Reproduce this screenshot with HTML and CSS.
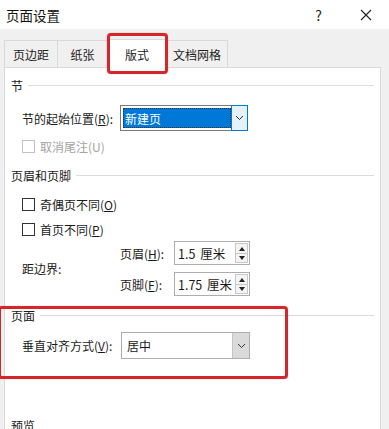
FILE: index.html
```html
<!DOCTYPE html>
<html lang="zh">
<head>
<meta charset="utf-8">
<link rel="stylesheet" href="styles.css">
</head>
<body>
<div class="dialog">
  <div class="titlebar">
    <span class="title">页面设置</span>
    <span class="help">?</span>
    <svg class="close" width="12" height="12" viewBox="0 0 12 12"><path d="M1 1 L11 11 M11 1 L1 11" stroke="#222" stroke-width="1.1" fill="none"/></svg>
  </div>
  <div class="tabs">
    <div class="tab t1">页边距</div>
    <div class="tab t2">纸张</div>
    <div class="tab t3 active">版式</div>
    <div class="tab t4">文档网格</div>
    <div class="hl hl-tab"></div>
  </div>
  <div class="panel">
    <div class="group g1"><span class="gtext">节</span><span class="gline"></span></div>
    <div class="row r-start">
      <span class="label">节的起始位置(<u>R</u>):</span>
      <div class="select focus">
        <span class="sel-text">新建页</span>
        <span class="drop drop-blue"><svg width="9" height="6" viewBox="0 0 9 6"><path d="M1 1 L4.5 4.5 L8 1" stroke="#333" stroke-width="1" fill="none"/></svg></span>
      </div>
    </div>
    <div class="row r-cb0">
      <span class="cb disabled"></span><span class="cbtext disabled-text">取消尾注(U)</span>
    </div>
    <div class="group g2"><span class="gtext">页眉和页脚</span><span class="gline"></span></div>
    <div class="row r-cb1"><span class="cb"></span><span class="cbtext">奇偶页不同(<u>O</u>)</span></div>
    <div class="row r-cb2"><span class="cb"></span><span class="cbtext">首页不同(<u>P</u>)</span></div>
    <div class="margins">
      <span class="mlabel">距边界:</span>
      <div class="spins">
        <div class="spinrow">
          <span class="slabel">页眉(<u>H</u>):</span>
          <div class="spin"><span class="stext">1.5 厘米</span><span class="sbtn"><span class="up"></span><span class="down"></span></span></div>
        </div>
        <div class="spinrow">
          <span class="slabel">页脚(<u>F</u>):</span>
          <div class="spin"><span class="stext">1.75 厘米</span><span class="sbtn"><span class="up"></span><span class="down"></span></span></div>
        </div>
      </div>
    </div>
    <div class="group g3"><span class="gtext">页面</span><span class="gline"></span></div>
    <div class="row r-valign">
      <span class="label">垂直对齐方式(<u>V</u>):</span>
      <div class="select plain">
        <span class="sel-text2">居中</span>
        <span class="drop drop-gray"><svg width="9" height="6" viewBox="0 0 9 6"><path d="M1 1 L4.5 4.5 L8 1" stroke="#333" stroke-width="1" fill="none"/></svg></span>
      </div>
    </div>
    <div class="group g4"><span class="gtext">预览</span></div>
  </div>
  <div class="hl hl-page"></div>
</div>
</body>
</html>
```
FILE: styles.css
```css
* { box-sizing: border-box; }
html, body { margin: 0; padding: 0; }
body {
  width: 389px; height: 429px; overflow: hidden;
  background: #f0f0f0;
  font-family: "Noto Sans CJK SC", "Microsoft YaHei", sans-serif;
  font-size: 12px; color: #1a1a1a;
}
.dialog { position: relative; width: 389px; height: 429px; }
.titlebar {
  height: 29px; background: #fff;
  display: flex; align-items: center;
  padding-left: 6px;
}
.title { font-size: 13.5px; color: #111; }
.help { margin-left: auto; font-size: 14px; margin-right: 38px; color: #222; }
.close { margin-right: 17px; }
.tabs {
  position: relative;
  display: flex; align-items: flex-end;
  height: 38px; padding-left: 4px;
}
.tab {
  height: 27px; display: flex; align-items: center; justify-content: center;
  background: #f0f0f0; border: 1px solid #d9d9d9; border-bottom: none;
  margin-right: -1px; color: #222;
}
.t1 { width: 54px; }
.t2 { width: 51px; }
.t3 { width: 60px; }
.t4 { width: 62px; }
.tab.active { background: #fff; height: 29px; position: relative; z-index: 2; margin-bottom: -1px; }
.hl {
  position: absolute; border: 3px solid #d5262c; border-radius: 4px; z-index: 5;
  box-shadow: 0 0 1px rgba(213,38,44,0.6);
}
.hl-tab { left: 107px; top: 4px; width: 61px; height: 41px; }
.hl-page { left: -2px; top: 306px; width: 290px; height: 73px; }
.panel {
  margin-left: 4px; width: 377px; height: 370px;
  background: #fff; border: 1px solid #d9d9d9;
  padding-left: 6px; padding-right: 6px;
  display: flex; flex-direction: column;
}
.group { display: flex; align-items: center; height: 16px; }
.gtext { color: #1a1a1a; }
.gline { flex: 1; height: 1px; background: #dcdcdc; margin-left: 5px; margin-top: 1px; }
.g1 { margin-top: 9px; }
.g2 { margin-top: 13px; }
.g3 { margin-top: 11px; }
.g4 { margin-top: 58px; }
.row { display: flex; align-items: center; padding-left: 11px; }
.label { width: 98px; }
.r-start { margin-top: 12px; height: 26px; }
.select {
  position: relative; display: flex; align-items: stretch;
  width: 129px; height: 26px; border: 1px solid #7a7a7a; background: #fff;
}
.focus { width: 128px; border-color: #7a7a7a; padding: 2px 0 2px 2px; }
.sel-text {
  flex: 1; background: #0078d7; color: #fff; padding-left: 2px;
  display: flex; align-items: center; outline: 1px dotted #333; outline-offset: -1px;
}
.drop { width: 17px; display: flex; align-items: center; justify-content: center; }
.drop-blue { background: #e5f1fb; border: 1px solid #0078d7; margin: -3px -1px -3px 0; width: 17px; }
.plain { border-color: #adadad; }
.sel-text2 { flex: 1; display: flex; align-items: center; padding-left: 5px; }
.drop-gray { background: #dadada; border-left: 1px solid #c4c4c4; }
.cb { width: 13px; height: 13px; border: 1px solid #333; background: #fff; flex: none; }
.cb.disabled { border-color: #c2c2c2; }
.cbtext { margin-left: 5px; }
.disabled-text { color: #a3a3a3; }
.r-cb0 { margin-top: 7px; height: 16px; }
.r-cb1 { margin-top: 13px; height: 16px; }
.r-cb2 { margin-top: 9px; height: 16px; }
.margins { display: flex; align-items: center; padding-left: 11px; margin-top: 4px; }
.mlabel { width: 98px; }
.spins { display: flex; flex-direction: column; gap: 7px; }
.spinrow { display: flex; align-items: center; }
.slabel { width: 54px; }
.spin {
  width: 76px; height: 24px; border: 1px solid #adadad; background: #fff;
  display: flex; align-items: center; padding-left: 3px;
}
.stext { flex: 1; font-size: 12.5px; word-spacing: 2px; }
.sbtn {
  width: 13px; height: 20px; margin-right: 1px;
  display: flex; flex-direction: column; border: 1px solid #c8c8c8; background: #f4f4f4;
}
.up, .down { flex: 1; position: relative; }
.up { border-bottom: 1px solid #c8c8c8; }
.up::after, .down::after {
  content: ""; position: absolute; left: 3px; top: 3px;
  border-left: 3px solid transparent; border-right: 3px solid transparent;
}
.up::after { border-bottom: 4px solid #222; }
.down::after { border-top: 4px solid #222; top: 2px; }
.r-valign { margin-top: 9px; height: 27px; }
.r-valign .label { width: 99px; }
.r-valign .select { height: 27px; width: 129px; }
u { text-decoration: underline; text-underline-offset: 1px; }
```
